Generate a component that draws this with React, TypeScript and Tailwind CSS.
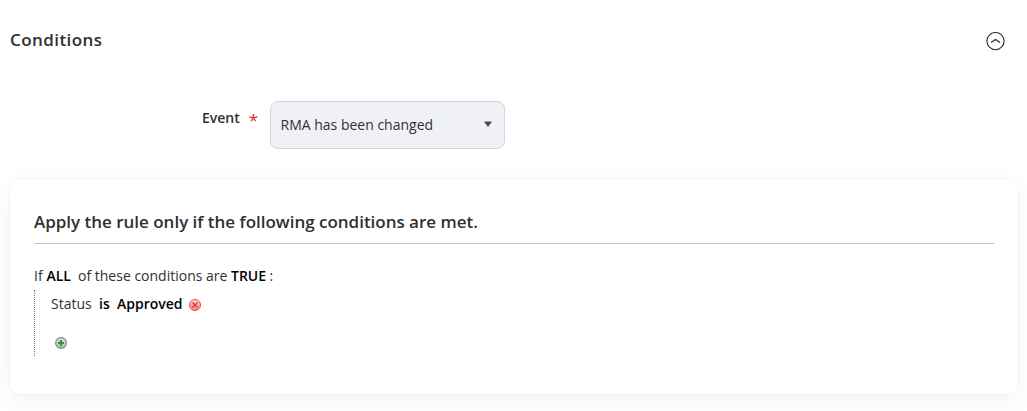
import React, { useState } from "react";

function DeleteIcon() {
  return (
    <svg width="12" height="12" viewBox="0 0 12 12" className="block">
      <defs>
        <linearGradient id="remove-fill" x1="0" y1="0" x2="0" y2="1">
          <stop offset="0" stopColor="#fbd3cf" />
          <stop offset="1" stopColor="#f5807a" />
        </linearGradient>
      </defs>
      <circle cx="6" cy="6" r="5.5" fill="url(#remove-fill)" stroke="#dd5550" strokeWidth="1" />
      <path d="M3.5 3.5l5 5M8.5 3.5l-5 5" stroke="#d8322e" strokeWidth="1.1" />
    </svg>
  );
}

function AddIcon() {
  return (
    <svg width="12" height="12" viewBox="0 0 12 12" className="block">
      <defs>
        <linearGradient id="add-fill" x1="0" y1="0" x2="0" y2="1">
          <stop offset="0" stopColor="#dde5db" />
          <stop offset="1" stopColor="#a3c0a2" />
        </linearGradient>
      </defs>
      <circle cx="6" cy="6" r="5.4" fill="url(#add-fill)" stroke="#6b8f70" strokeWidth="1.1" />
      <path d="M6 3v6M3 6h6" stroke="#37914f" strokeWidth="2" />
    </svg>
  );
}

function EventField() {
  return (
    <div className="mt-[41px] flex items-start">
      <div className="flex w-[270px] pl-[202px] pt-[7px] text-[14px] leading-5 font-semibold text-[#303030]">
        <span>Event</span>
        <span className="ml-[9px] pt-[2px] text-[17px] font-normal text-[#e22626]">*</span>
      </div>
      <button
        type="button"
        className="flex h-12 w-[235px] items-center justify-between rounded-lg border border-[#cfd5e3] bg-[#f0f1f5] pr-3 pb-[2px] pl-[9.5px] text-[14px] text-[#303030]"
      >
        <span>RMA has been changed</span>
        <svg width="8" height="6" viewBox="0 0 8 6">
          <path d="M0 0.5h8L4 6z" fill="#514943" />
        </svg>
      </button>
    </div>
  );
}

function ConditionsCard() {
  return (
    <section className="mt-[30px] mr-[9px] ml-[10px] h-[215px] rounded-[10px] bg-white px-6 pt-[31px] shadow-[0_0_2px_rgba(80,90,110,0.12),0_8px_24px_rgba(80,90,110,0.07)]">
      <h3 className="h-[34px] w-[960px] border-b border-[#cac3b4] text-[17px] leading-6 font-semibold tracking-[-0.015px] text-[#303030]">
        Apply the rule only if the following conditions are met.
      </h3>
      <p className="mt-[22px] flex text-[14px] leading-5 text-[#303030]">
        <span className="w-[12.5px]">If</span>
        <span className="w-[31.5px] font-semibold text-black">ALL</span>
        <span className="w-[153px]">of these conditions are</span>
        <span className="w-[38.5px] font-semibold text-black">TRUE</span>
        <span>:</span>
      </p>
      <ul className="mt-1 h-[66px] border-l border-dotted border-[#777] pl-4 text-[14px] leading-5 text-[#303030]">
        <li className="flex pt-[4px]">
          <span className="w-12">Status</span>
          <span className="w-[18px] font-semibold text-black">is</span>
          <span className="w-[72px] font-semibold tracking-[-0.02px] text-black">Approved</span>
          <button type="button" aria-label="Remove" className="mt-[5px] h-3">
            <DeleteIcon />
          </button>
        </li>
        <li className="mt-[23px] pl-1">
          <button type="button" aria-label="Add" className="block h-3">
            <AddIcon />
          </button>
        </li>
      </ul>
    </section>
  );
}

export default function App() {
  const [open, setOpen] = useState(true);

  return (
    <main className="h-[411px] overflow-hidden bg-white pt-7 font-['Open_Sans',sans-serif]">
      <header className="flex h-8 items-start justify-between pr-[22px] pl-[10px]">
        <h2 className="text-[17px] leading-6 font-semibold tracking-[0.025em] text-[#303030]">Conditions</h2>
        <button type="button" aria-label="Toggle section" className="mt-1" onClick={() => setOpen(!open)}>
          <svg width="19" height="19" viewBox="0 0.4 19 19" fill="none" stroke="#303030" className="block">
            <circle cx="9.5" cy="9.5" r="8.6" strokeWidth="1.1" />
            <path d={open ? "M5 11l4.5-3.2L14 11" : "M5 8l4.5 3.2L14 8"} strokeWidth="1.2" />
          </svg>
        </button>
      </header>
      {open && (
        <>
          <EventField />
          <ConditionsCard />
        </>
      )}
    </main>
  );
}
